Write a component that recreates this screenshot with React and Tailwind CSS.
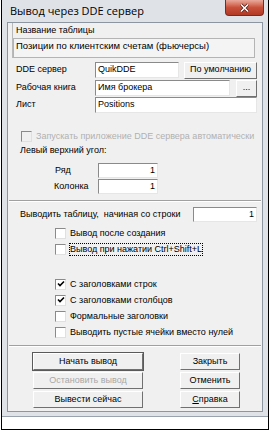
import React from 'react'

const font = { fontFamily: '"Liberation Sans", Arial, sans-serif' }

function Edit({ value, className = '', right = false }) {
    return (
        <div
            className={`h-full bg-white border-t border-l border-t-[#8a8a8a] border-l-[#8a8a8a] border-b border-r border-b-[#e6e6e6] border-r-[#e6e6e6] flex items-center px-[2px] text-[9px] whitespace-nowrap ${right ? 'justify-end' : ''} ${className}`}
        >
            {value}
        </div>
    )
}

function Button({ label, disabled = false, strong = false, className = '' }) {
    return (
        <div
            className={`h-[17px] flex items-center justify-center text-[9px] whitespace-nowrap bg-[#f0f0f0] border border-t-white border-l-white border-b-[#707070] border-r-[#707070] ${strong ? 'outline outline-1 outline-[#5a5a5a]' : ''} ${disabled ? 'text-[#a8a8a8]' : 'text-black'} ${className}`}
        >
            {label}
        </div>
    )
}

function Check({ label, checked = false, disabled = false, focus = false, h = 'h-[16px]' }) {
    return (
        <div className={`${h} flex items-center gap-[4px]`}>
            <div className={`w-[11px] h-[11px] border border-t-[#8a8a8a] border-l-[#8a8a8a] border-b-[#e0e0e0] border-r-[#e0e0e0] flex items-center justify-center ${disabled ? 'bg-[#f0f0f0]' : 'bg-white'}`}>
                {checked && (
                    <svg width="8" height="8" viewBox="0 0 8 8">
                        <path d="M1 3.5 L3 5.5 L7 1.5" stroke="#000" strokeWidth="1.6" fill="none" />
                    </svg>
                )}
            </div>
            <span className={`text-[9px] leading-[11px] whitespace-nowrap ${disabled ? 'text-[#b0b0b0]' : 'text-black'} ${focus ? 'outline outline-1 outline-dotted outline-black' : ''}`}>
                {label}
            </span>
        </div>
    )
}

function Separator() {
    return (
        <div className="-mx-[3px]">
            <div className="h-[1px] bg-[#a0a0a0]" />
            <div className="h-[1px] bg-white" />
        </div>
    )
}

export default function App() {
    return (
        <div className="w-[271px] h-[431px] bg-white overflow-hidden" style={font}>
            <div className="ml-[1px] w-[268px] h-[430px] border-l border-r border-b border-black">
                <div className="w-full h-[417px] bg-[#dfe3e8] border-b border-[#9aa3ad] flex flex-col px-[5px] pb-[4px]">
                    {/* title bar */}
                    <div className="h-[22px] flex items-start justify-between">
                        <span className="pl-[3px] pt-[3px] text-[11px] text-black" style={{ fontFamily: '"Open Sans", "Liberation Sans", sans-serif' }}>
                            Вывод через DDE сервер
                        </span>
                        <div className="mr-[-1px] w-[39px] h-[16px] rounded-b-[4px] bg-gradient-to-b from-[#e8a99c] via-[#c9503a] to-[#b13a25] border border-[#7a2a20] border-t-0 flex items-center justify-center">
                            <svg width="11" height="10" viewBox="0 0 11 10">
                                <path d="M2 1.5 L9 8.5 M9 1.5 L2 8.5" stroke="#4a1a14" strokeWidth="3" />
                                <path d="M2 1.5 L9 8.5 M9 1.5 L2 8.5" stroke="#fff" strokeWidth="1.6" />
                            </svg>
                        </div>
                    </div>

                    {/* client */}
                    <div className="flex-1 bg-[#f0f0f0] border border-[#8d96a0] flex flex-col px-[4px] text-black">
                        <div className="border-l border-[#b9b9b9]">
                            <div className="mt-[1px] h-[14px] flex items-center pl-[3px] text-[9px]">Название таблицы</div>
                            <div className="mr-[3px] h-[20px] border border-[#b4b4b4] bg-[#f4f4f4] text-[9.5px] pl-[2px] leading-[13px] whitespace-nowrap">
                                Позиции по клиентским счетам (фьючерсы)
                            </div>
                        </div>

                        <div className="pl-[4px] pr-[1px]">
                            <div className="mt-[4px] h-[16px] flex items-center">
                                <span className="w-[79px] text-[9px]">DDE сервер</span>
                                <Edit value="QuikDDE" className="w-[84px]" />
                                <Button label="По умолчанию" className="ml-[5px] flex-1 h-[16px]" />
                            </div>
                            <div className="mt-[2px] h-[16px] flex items-center">
                                <span className="w-[79px] text-[9px]">Рабочая книга</span>
                                <Edit value="Имя брокера" className="w-[135px]" />
                                <Button label="..." className="ml-[6px] flex-1 h-[15px] text-[#707070]" />
                            </div>
                            <div className="mt-[1px] h-[16px] flex items-center">
                                <span className="w-[79px] text-[9px]">Лист</span>
                                <Edit value="Positions" className="flex-1" />
                            </div>

                            <div className="mt-[16px] pl-[5px]">
                                <Check label="Запускать приложение DDE сервера автоматически" disabled h="h-[15px]" />
                            </div>
                            <div className="h-[14px] flex items-center pl-[4px] text-[9px]">Левый верхний угол:</div>

                            <div className="mt-[5px] h-[15px] flex items-center">
                                <span className="w-[82px] pl-[39px] text-[9px]">Ряд</span>
                                <Edit value="1" right className="w-[60px]" />
                            </div>
                            <div className="mt-[1px] h-[15px] flex items-center">
                                <span className="w-[82px] pl-[38px] text-[9px]">Колонка</span>
                                <Edit value="1" right className="w-[60px]" />
                            </div>
                        </div>

                        <div className="mt-[6px]"><Separator /></div>

                        <div className="pl-[8px] pr-[1px]">
                            <div className="mt-[5px] h-[15px] flex items-center">
                                <span className="w-[173px] text-[9px] whitespace-nowrap">Выводить таблицу,&nbsp; начиная со строки</span>
                                <Edit value="1" right className="flex-1" />
                            </div>
                            <div className="mt-[3px] pl-[35px]">
                                <Check label="Вывод после создания" />
                                <Check label="Вывод при нажатии Ctrl+Shift+L" focus />
                            </div>
                            <div className="mt-[19px] pl-[35px]">
                                <Check label="С заголовками строк" checked />
                                <Check label="С заголовками столбцов" checked />
                                <Check label="Формальные заголовки" />
                                <Check label="Выводить пустые ячейки вместо нулей" />
                            </div>
                        </div>

                        <div className="mt-[5px]"><Separator /></div>

                        <div className="mt-[6px] flex justify-between pl-[21px] pr-[18px]">
                            <div className="w-[110px] flex flex-col gap-[2px]">
                                <Button label="Начать вывод" strong />
                                <Button label="Остановить вывод" disabled />
                                <Button label="Вывести сейчас" />
                            </div>
                            <div className="w-[60px] flex flex-col gap-[2px]">
                                <Button label="Закрыть" />
                                <Button label="Отменить" />
                                <Button label={<span><u>С</u>правка</span>} />
                            </div>
                        </div>
                    </div>
                </div>
            </div>
        </div>
    )
}
